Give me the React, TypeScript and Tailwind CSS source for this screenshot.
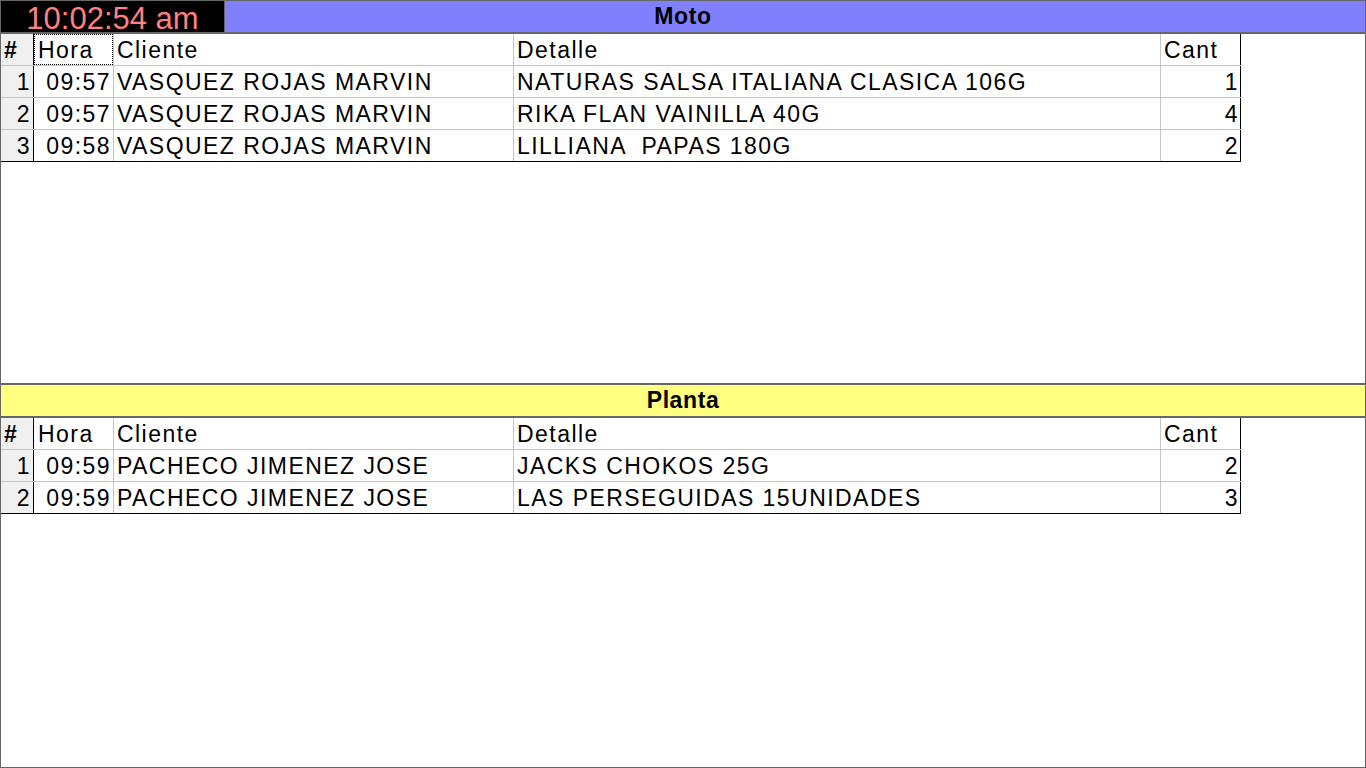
import React from "react";

type Row = { n: number; hora: string; cliente: string; detalle: string; cant: number };

const moto: Row[] = [
  { n: 1, hora: "09:57", cliente: "VASQUEZ ROJAS MARVIN", detalle: "NATURAS SALSA ITALIANA CLASICA 106G", cant: 1 },
  { n: 2, hora: "09:57", cliente: "VASQUEZ ROJAS MARVIN", detalle: "RIKA FLAN VAINILLA 40G", cant: 4 },
  { n: 3, hora: "09:58", cliente: "VASQUEZ ROJAS MARVIN", detalle: "LILLIANA  PAPAS 180G", cant: 2 },
];

const planta: Row[] = [
  { n: 1, hora: "09:59", cliente: "PACHECO JIMENEZ JOSE", detalle: "JACKS CHOKOS 25G", cant: 2 },
  { n: 2, hora: "09:59", cliente: "PACHECO JIMENEZ JOSE", detalle: "LAS PERSEGUIDAS 15UNIDADES", cant: 3 },
];

function Table({ rows, focus }: { rows: Row[]; focus: boolean }) {
  return (
    <div className="w-[1240px] text-[23px] tracking-[1.45px] text-black leading-none">
      <div className="flex h-[32px] border-b border-[#c4c4c4]">
        <div className="w-[33px] bg-[#f0f0f0] border-r border-black flex items-center pt-[2px] pl-[3px] font-bold">#</div>
        <div className="w-[80px] border-r border-[#c4c4c4] flex">
          <div className={`flex-1 flex items-center pt-[1px] pl-[3px] ${focus ? "border border-dotted border-black" : "pl-[4px]"}`}>Hora</div>
        </div>
        <div className="w-[400px] border-r border-[#c4c4c4] flex items-center pt-[2px] pl-[3px]">Cliente</div>
        <div className="w-[647px] border-r border-[#c4c4c4] flex items-center pt-[2px] pl-[3px]">Detalle</div>
        <div className="w-[80px] border-r border-black flex items-center pt-[2px] pl-[3px]">Cant</div>
      </div>
      {rows.map((r, i) => (
        <div
          key={r.n}
          className={`flex h-[32px] border-b ${i === rows.length - 1 ? "border-black" : "border-[#c4c4c4]"}`}
        >
          <div className="w-[33px] bg-[#f0f0f0] border-r border-black flex items-center justify-end pt-[2px] pr-[2px]">{r.n}</div>
          <div className="w-[80px] border-r border-[#c4c4c4] flex items-center justify-end pt-[2px] pr-[2px]">{r.hora}</div>
          <div className="w-[400px] border-r border-[#c4c4c4] flex items-center pt-[2px] pl-[3px] whitespace-pre">{r.cliente}</div>
          <div className="w-[647px] border-r border-[#c4c4c4] flex items-center pt-[2px] pl-[3px] whitespace-pre">{r.detalle}</div>
          <div className="w-[80px] border-r border-black flex items-center justify-end pt-[2px] pr-[1px]">{r.cant}</div>
        </div>
      ))}
    </div>
  );
}

function Section({
  title,
  color,
  rows,
  clock,
  focus,
}: {
  title: string;
  color: string;
  rows: Row[];
  clock?: string;
  focus: boolean;
}) {
  return (
    <div className="h-[384px] border border-[#666] flex flex-col bg-white">
      <div className="h-[33px] border-b-2 border-[#666] grid grid-cols-[224px_1fr] grid-rows-1">
        <div
          className={`col-start-1 col-span-2 row-start-1 flex items-center justify-center font-bold text-[23px] tracking-[0.6px] text-black leading-none ${color}`}
        >
          {title}
        </div>
        {clock && (
          <div className="col-start-1 row-start-1 z-10 bg-black border-r border-[#666] flex items-center justify-center pt-[3px] text-[31px] text-[#ff8080] leading-none">
            {clock}
          </div>
        )}
      </div>
      <Table rows={rows} focus={focus} />
    </div>
  );
}

export default function App() {
  return (
    <div
      className="w-[1366px] h-[768px] bg-white overflow-hidden"
      style={{ fontFamily: '"Liberation Sans", Arial, sans-serif' }}
    >
      <Section title="Moto" color="bg-[#8080ff]" rows={moto} clock="10:02:54 am" focus={true} />
      <Section title="Planta" color="bg-[#ffff80]" rows={planta} focus={false} />
    </div>
  );
}
